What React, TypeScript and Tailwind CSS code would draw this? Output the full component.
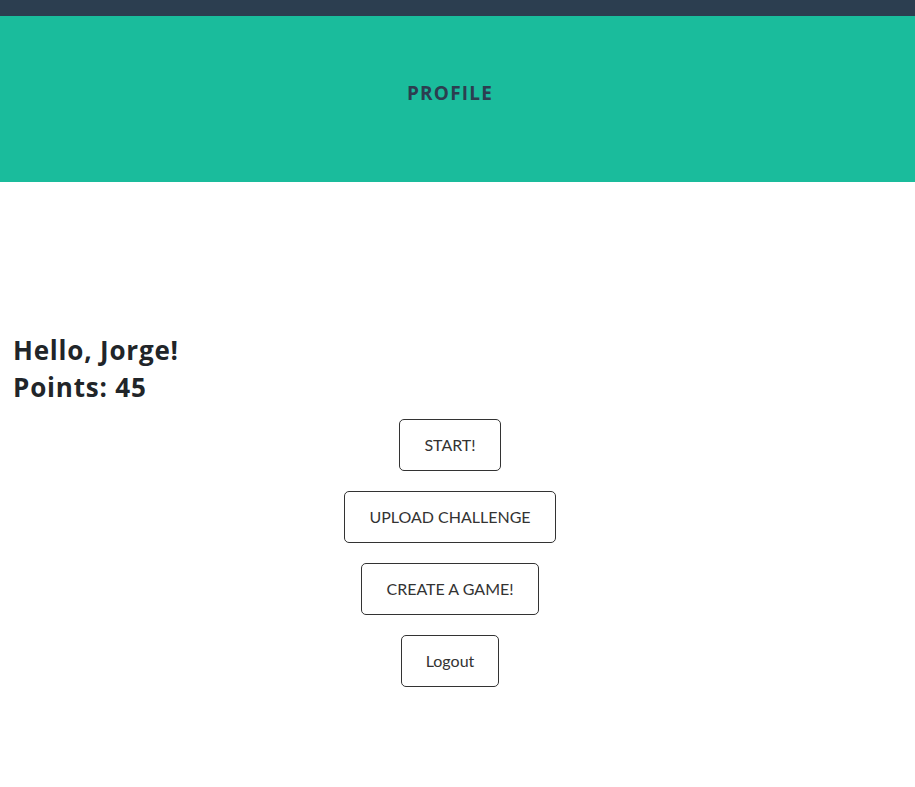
export default function App() {
  const buttons = ['START!', 'UPLOAD CHALLENGE', 'CREATE A GAME!', 'Logout'];

  return (
    <div className="min-h-screen w-full bg-white" style={{ fontFamily: 'Lato, "Open Sans", sans-serif' }}>
      {/* top nav strip */}
      <div className="h-4 w-full bg-[#2c3e50]" />

      {/* header */}
      <header className="flex h-[166px] w-full items-center justify-center bg-[#1abc9c] pr-[15px] pb-3">
        <h1 className="font-['Open_Sans',sans-serif] text-[19px] font-bold tracking-[1.2px] text-[#2c3e50]">PROFILE</h1>
      </header>

      <main className="flex flex-col pr-[15px]">
        <div className="px-[13px] pt-[154px] font-['Open_Sans',sans-serif] text-[#212529]">
          <h2 className="mb-2 text-[26px] font-bold leading-[29px] tracking-[0.8px]">Hello, Jorge!</h2>
          <h2 className="text-[26px] font-bold leading-[29px] tracking-[0.8px]">Points: 45</h2>
        </div>

        <div className="mt-[17px] flex flex-col items-center gap-5">
          {buttons.map((label) => (
            <button
              key={label}
              className="h-[52px] rounded-[5px] border border-[#333] bg-white px-6 text-[16px] text-[#333]"
            >
              {label}
            </button>
          ))}
        </div>
      </main>
    </div>
  );
}
